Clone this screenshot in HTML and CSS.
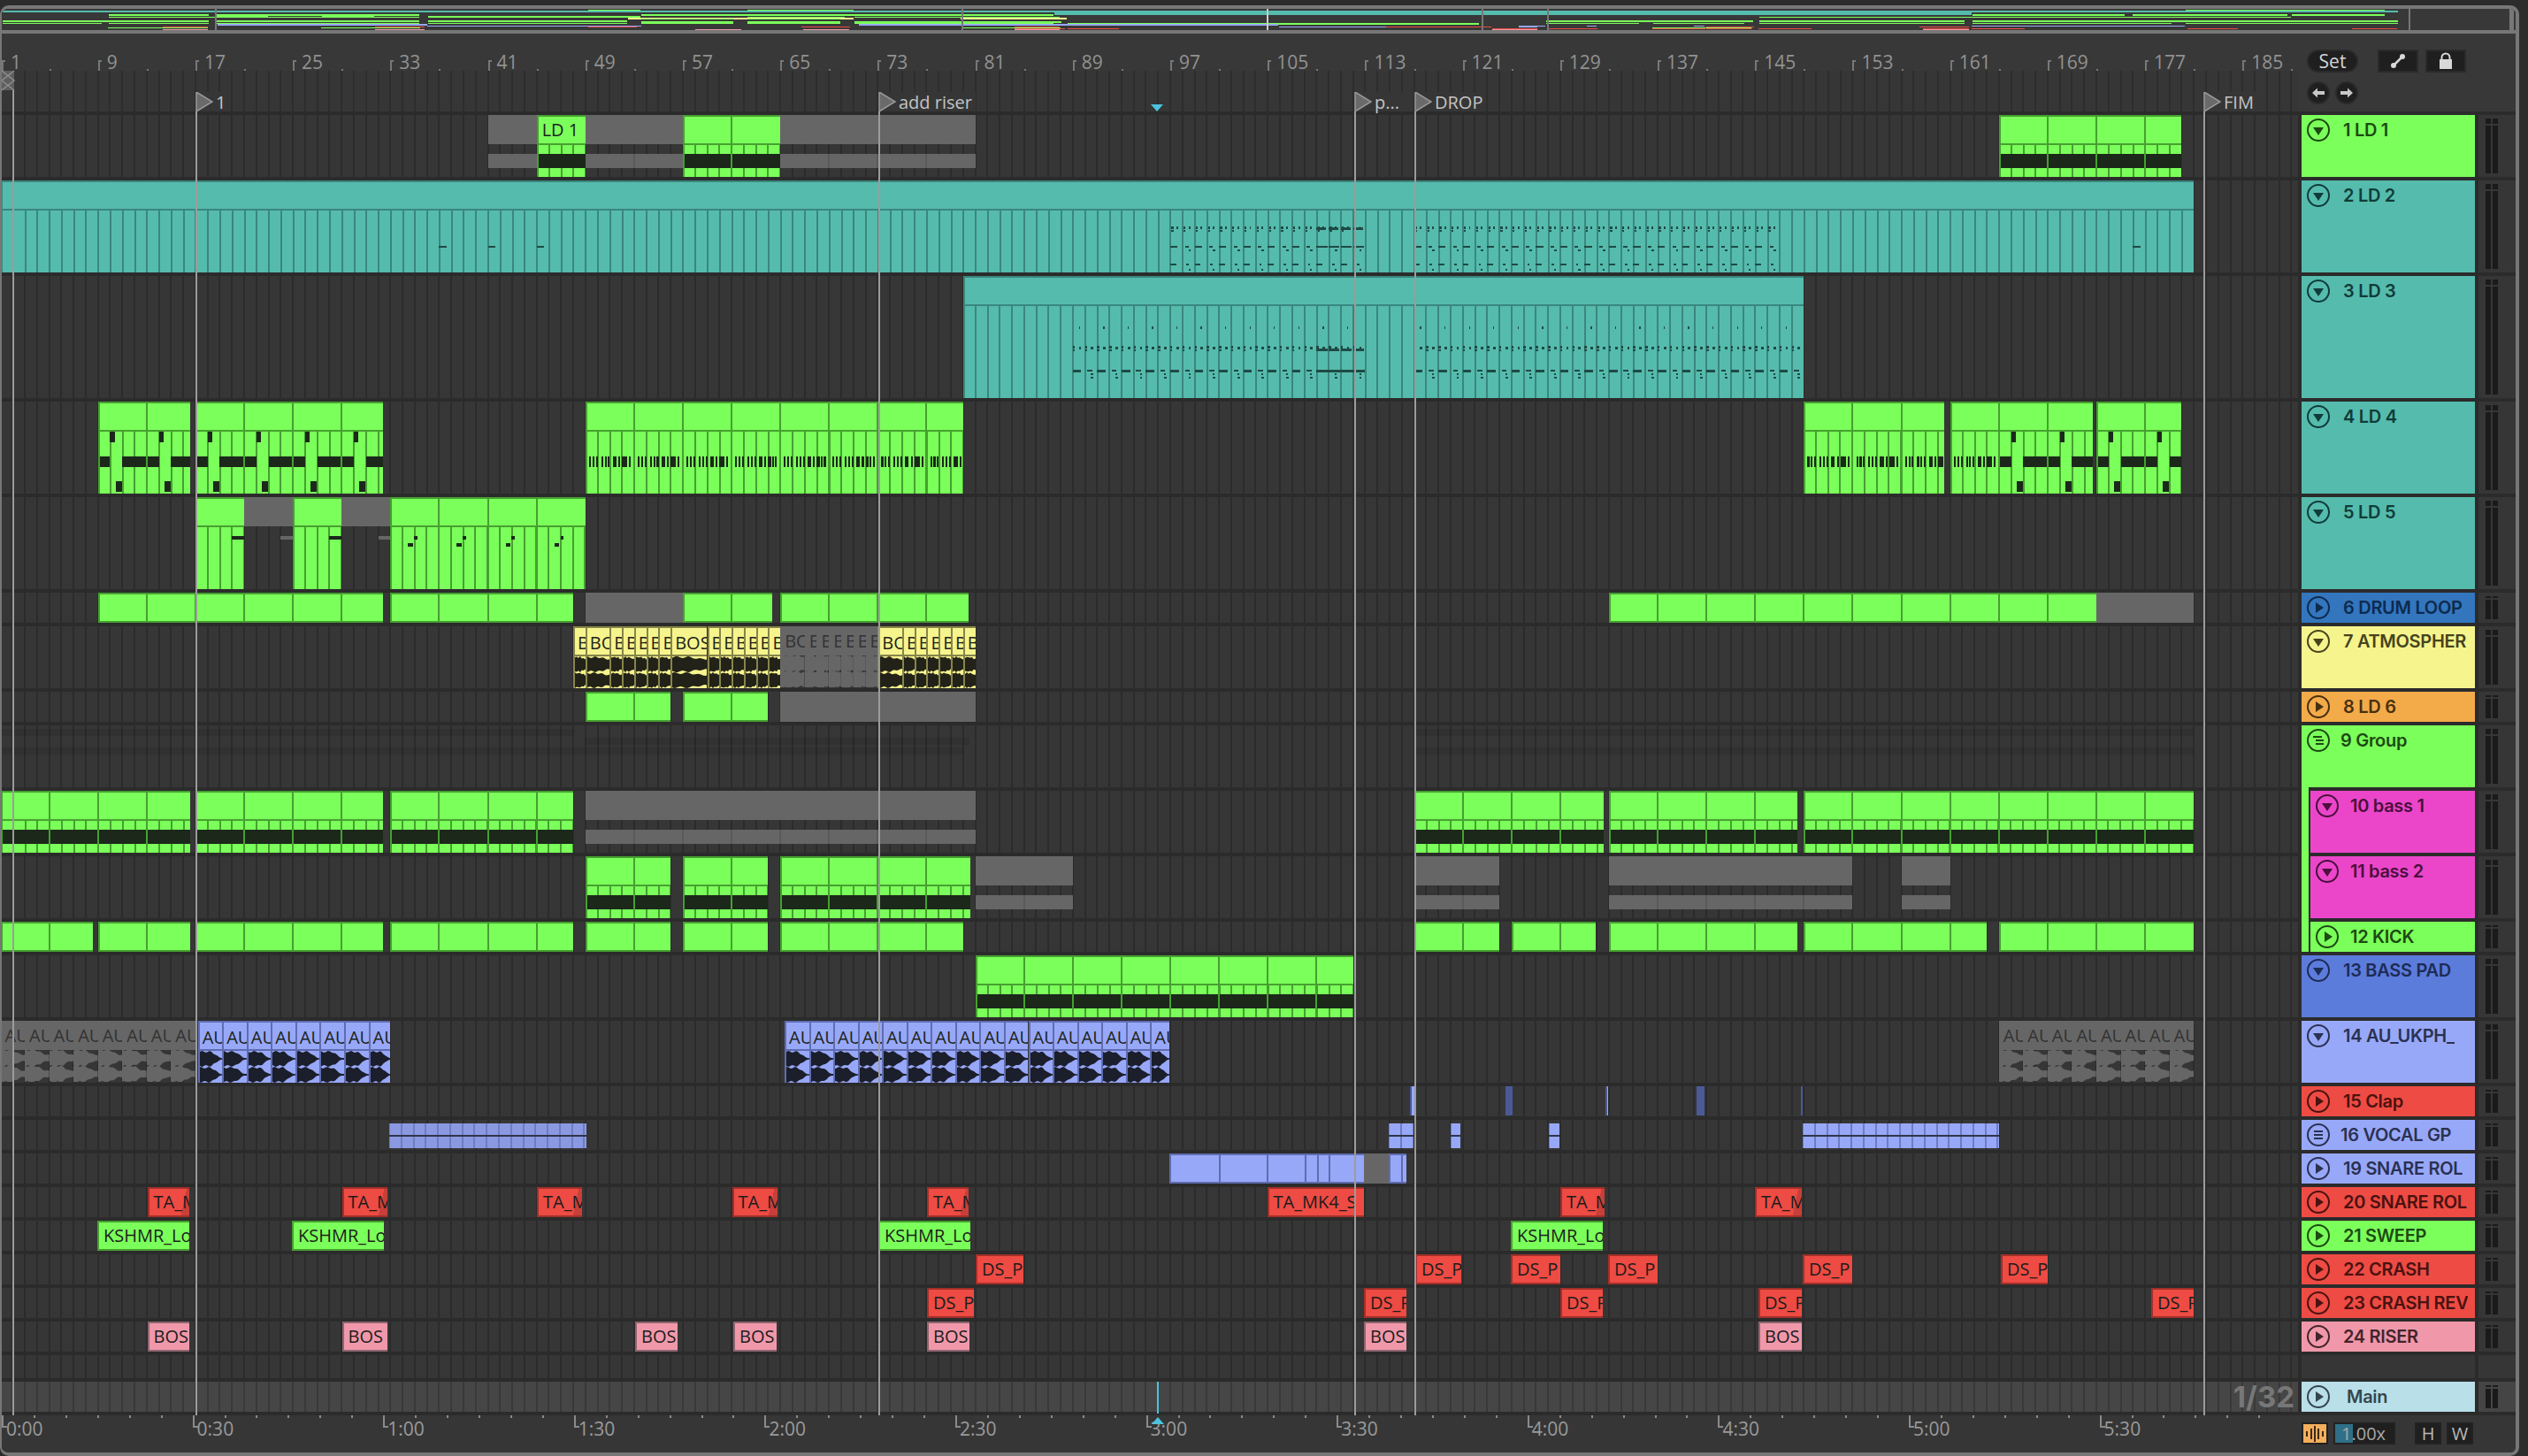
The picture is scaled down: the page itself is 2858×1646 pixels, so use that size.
FILE: index.html
```html
<!DOCTYPE html>
<html lang="en">
<head>
  <meta charset="UTF-8" />
  <title>Arrangement</title>
  <link rel="stylesheet" href="styles.css">
</head>
<body>
  <div class="app" id="app">
    <div class="overview" id="overview"><div class="overview-end"></div></div>

    <div class="top">
      <div class="top-left">
        <div class="ruler" id="ruler"></div>
        <div class="flag-strip"></div>
      </div>
      <div class="controls">
        <div class="controls-row">
          <button class="pill">Set</button>
          <button class="square">
            <svg width="22" height="22" viewBox="0 0 22 22"><path d="M6 16 L16 6" stroke="#d8d8d8" stroke-width="2.5"/><circle cx="16" cy="6" r="3" fill="#d8d8d8"/><circle cx="6" cy="16" r="3" fill="#d8d8d8"/></svg>
          </button>
          <button class="square">
            <svg width="18" height="20" viewBox="0 0 18 20"><path d="M4.5 9 V6 a4.5 4.5 0 0 1 9 0 V9" fill="none" stroke="#d8d8d8" stroke-width="2"/><rect x="2" y="8" width="14" height="11" fill="#d8d8d8"/></svg>
          </button>
        </div>
        <div class="arrows">
          <button class="round">
            <svg width="16" height="16" viewBox="0 0 16 16"><path d="M1 8 L7 2.5 V6 H15 V10 H7 V13.5 Z" fill="#c8c8c8"/></svg>
          </button>
          <button class="round">
            <svg width="16" height="16" viewBox="0 0 16 16"><path d="M15 8 L9 2.5 V6 H1 V10 H9 V13.5 Z" fill="#c8c8c8"/></svg>
          </button>
        </div>
      </div>
    </div>

    <div class="tracks" id="tracks"></div>

    <div class="bottom">
      <div class="times" id="times"></div>
      <div class="bottom-controls">
        <button class="cpu">
          <svg width="24" height="20" viewBox="0 0 24 20"><path d="M3 7 V13 M8 4 V16 M12 1 V19 M16 4 V16 M21 7 V13" stroke="#3a2a12" stroke-width="2"/></svg>
        </button>
        <div class="zoom-field"><div class="zoom-fill"></div><span class="zoom-text">1.00x</span></div>
        <button class="key key-h">H</button>
        <button class="key">W</button>
      </div>
    </div>
  </div>
  <script src="app.js"></script>
</body>
</html>
```

FILE: styles.css
```css
* {
  box-sizing: border-box;
}

html, body {
  margin: 0;
  height: 100%;
  overflow: hidden;
}

body {
  width: 2858px;
  height: 1646px;
  padding-top: 6px;
  background: #2c2c2c;
  font-family: "Open Sans", sans-serif;
  color: #1d2a18;
}

button {
  font-family: inherit;
  padding: 0;
  display: flex;
  align-items: center;
  justify-content: center;
}

.app {
  position: relative;
  width: 2848px;
  height: 1640px;
  background: #363636;
  border: solid #777;
  border-width: 4px 4px 4px 2px;
  border-radius: 10px;
  overflow: hidden;
  display: flex;
  flex-direction: column;
}

/* overview */
.overview {
  position: relative;
  height: 28px;
  flex-shrink: 0;
  background: #383838;
  border-bottom: 4px solid #777;
  overflow: hidden;
}

.overview-end {
  position: absolute;
  right: 2px;
  top: 0;
  bottom: 0;
  width: 5px;
  background: #777;
}

.mini {
  position: absolute;
}

.mini-line {
  position: absolute;
  top: 0;
  bottom: 0;
  width: 2px;
  background: #777;
}

.mini-line.now {
  background: #ccc;
}

/* ruler and controls */
.top {
  display: flex;
  height: 88px;
  flex-shrink: 0;
  background: #383838;
}

.top-left {
  width: 2596px;
  flex-shrink: 0;
}

.ruler {
  position: relative;
  height: 42px;
}

.ruler-tick {
  position: absolute;
  top: 30px;
  width: 4px;
  height: 12px;
  border: solid #777;
  border-width: 2px 0 0 2px;
}

.ruler-dot {
  position: absolute;
  top: 40px;
  width: 2px;
  height: 2px;
  background: #777;
}

.ruler-num {
  position: absolute;
  top: 19px;
  font-size: 21px;
  line-height: 27px;
  color: #929292;
}

.flag-strip {
  height: 46px;
  background: repeating-linear-gradient(90deg, #363636 0 11.276px, #2d2d2d 11.276px 13.276px, #363636 13.276px 13.776px);
}

.controls {
  flex: 1;
  padding: 18px 0 0 10px;
}

.controls-row, .arrows {
  display: flex;
}

.arrows {
  gap: 6px;
  margin-top: 10px;
}

.pill {
  width: 58px;
  height: 26px;
  margin-right: 22px;
  border-radius: 13px;
  border: 2px solid #2a2a2a;
  background: #1f1f1f;
  color: #d4d4d4;
  font-size: 21px;
  font-weight: 500;
}

.square {
  width: 46px;
  height: 26px;
  margin-right: 8px;
  border: 2px solid #2a2a2a;
  background: #1f1f1f;
}

.round {
  width: 26px;
  height: 26px;
  border-radius: 50%;
  border: 2px solid #2a2a2a;
  background: #1f1f1f;
}

/* track rows */
.tracks {
  display: flex;
  flex-direction: column;
  gap: 4px;
  flex-shrink: 0;
  padding: 4px 0;
  background: #2b2b2b;
}

.row {
  display: flex;
  gap: 4px;
  flex-shrink: 0;
}

.lane {
  position: relative;
  width: 2596px;
  flex-shrink: 0;
  overflow: hidden;
  background: repeating-linear-gradient(90deg, #363636 0 11.276px, #2b2b2b 11.276px 13.276px, #363636 13.276px 13.776px);
}

.lane-main {
  background: repeating-linear-gradient(90deg, #464646 0 11.276px, #393939 11.276px 13.276px, #464646 13.276px 13.776px);
}

.grid-text {
  position: absolute;
  right: 4px;
  top: -3px;
  font-family: Inter, sans-serif;
  font-size: 33px;
  line-height: 40px;
  font-weight: 700;
  color: #777;
}

.head {
  position: relative;
  width: 196px;
  flex-shrink: 0;
  background: var(--fill);
  color: var(--ink);
}

.head.nested {
  margin-left: 10px;
  width: 186px;
}

.head.nested::before {
  content: "";
  position: absolute;
  left: -10px;
  top: -4px;
  bottom: 0;
  width: 8px;
  background: #7bff5a;
}

.head.blank {
  background: #363636;
}

.head-line {
  display: flex;
  align-items: center;
  height: 34px;
  padding-left: 6px;
  gap: 15px;
}

.head.nested .head-line {
  gap: 13px;
}

.head.tight .head-line {
  gap: 12px;
}

.head.wide .head-line {
  gap: 19px;
}

.head-icon {
  flex-shrink: 0;
  display: block;
}

.head-name {
  font-family: Inter, sans-serif;
  font-size: 20px;
  font-weight: 600;
  letter-spacing: -0.3px;
  white-space: nowrap;
  overflow: hidden;
}

.meter {
  width: 42px;
  flex-shrink: 0;
  display: grid;
  grid-template-columns: 6px 6px;
  grid-template-rows: 6px 1fr;
  column-gap: 2px;
  row-gap: 2px;
  padding: 4px 20px 4px 8px;
  background: #363636;
}

.meter.small {
  grid-template-rows: 2px 1fr;
}

.meter.main {
  background: #454545;
}

.meter.empty {
  display: block;
  padding: 0;
}

.meter i {
  background: #1a1a1a;
}

/* colours */
.green { --fill: #7bff5a; --edge: #46a030; --ink: #1c4a12; --note: #1b281a; }
.teal { --fill: #55bbad; --edge: #3a877d; --ink: #103c38; --note: #1f4a45; }
.peri { --fill: #98a8f8; --edge: #5f6cb0; --ink: #2a3152; --note: #1b1e2b; }
.yellow { --fill: #f6f48d; --edge: #86854a; --ink: #45441c; --note: #222219; }
.red { --fill: #ed4b43; --edge: #a32f2a; --ink: #4a1210; --note: #222; }
.pink { --fill: #f098aa; --edge: #8e6570; --ink: #44242c; --note: #222; }
.magenta { --fill: #eb46c9; --edge: #9a2f84; --ink: #4a0f3d; --note: #222; }
.orange { --fill: #f3aa49; --edge: #a0702c; --ink: #47300f; --note: #222; }
.blue { --fill: #3376bd; --edge: #22508a; --ink: #0d2b4e; --note: #222; }
.pad { --fill: #5c7cdb; --edge: #3c538f; --ink: #1d2b57; --note: #222; }
.ice { --fill: #b9dfe9; --edge: #7b9aa2; --ink: #36464d; --note: #222; }

/* clips */
.clip {
  position: absolute;
  top: 0;
  bottom: 0;
  overflow: hidden;
  color: #1c241a;
  display: flex;
  flex-direction: column;
}

.clip::after {
  content: "";
  position: absolute;
  inset: 0;
  border: solid var(--edge);
  border-width: 2px 0 0 2px;
  pointer-events: none;
}

.clip-title {
  height: 34px;
  flex-shrink: 0;
  padding-left: 6px;
  border-bottom: 2px solid var(--edge);
  background: var(--fill);
  font-size: 20px;
  line-height: 33px;
  white-space: nowrap;
  overflow: hidden;
}

.clip-body {
  flex: 1;
  background: repeating-linear-gradient(90deg, var(--edge) 0 1px, var(--fill) 1px 12.776px, var(--edge) 12.776px 13.776px);
}

.note {
  position: absolute;
  background: var(--note);
}

.split {
  position: absolute;
  top: 0;
  bottom: 0;
  width: 2px;
  background: var(--edge);
}

.clip.block {
  background: var(--fill);
}

.clip.block::after {
  border-width: 2px 0 2px 2px;
}

.clip.shot {
  background: var(--fill);
  padding-left: 7px;
  font-size: 20px;
  line-height: 33px;
  white-space: nowrap;
  color: #1c1c1c;
}

.clip.shot::after {
  border-width: 2px 0 2px 2px;
}

.clip.shot.fade {
  background: linear-gradient(102deg, var(--fill) 82%, #c83f39 82%);
}

.clip.muted {
  --fill: #666;
  --edge: #5a5a5a;
  --note: #666;
}

.clip.muted::after {
  display: none;
}

.clip.muted .clip-title {
  border-bottom: 0;
  color: #333;
  height: 33px;
}

.clip.muted .clip-body {
  background: none;
}

.clip.audio {
  background: none;
}

.clip.audio::after {
  display: none;
}

.slice {
  position: absolute;
  top: 0;
  bottom: 0;
  overflow: hidden;
  border-left: 2px solid var(--edge);
  display: flex;
  flex-direction: column;
}

.slice .clip-title {
  height: 34px;
  padding-left: 3px;
  border-top: 2px solid var(--edge);
}

.slice-wave {
  flex: 1;
  background: var(--fill);
}

.slice-wave svg {
  display: block;
}

.slice-wave path {
  fill: var(--note);
}

.clip.muted .slice {
  border-left: 0;
}

.clip.muted .slice .clip-title {
  border-top: 0;
  padding-left: 5px;
}

.clip.muted .slice-wave {
  background: none;
}

.vox {
  position: absolute;
  top: 4px;
  bottom: 2px;
  overflow: hidden;
  background: repeating-linear-gradient(90deg, #6f7cc0 0 1px, var(--fill) 1px 12.776px, #6f7cc0 12.776px 13.776px);
}

.vox.dim {
  --fill: #8b99e2;
}

.vox::after {
  content: "";
  position: absolute;
  left: 0;
  right: 0;
  top: 13px;
  height: 2px;
  background: #30344a;
}

.sliver {
  position: absolute;
  top: 0;
  bottom: 1px;
  background: #4b5a96;
}

.sliver.lit {
  background: linear-gradient(90deg, #4b5a96 0 50%, #98a8f8 50%);
}

.shade {
  position: absolute;
  background: rgba(0, 0, 0, 0.09);
}

/* markers over the lanes */
.flag-line {
  position: absolute;
  width: 2px;
  bottom: 42px;
  background: #9c9c9c;
}

.flag {
  position: absolute;
  top: 94px;
  height: 22px;
  display: flex;
  align-items: center;
  gap: 3px;
  background: #363636;
  padding-right: 4px;
  font-size: 20px;
  color: #c4c4c4;
  white-space: nowrap;
}

.flag svg {
  display: block;
  flex-shrink: 0;
}

.loop-mark {
  position: absolute;
  left: 0;
  top: 70px;
}

.loop-mark svg {
  display: block;
}

.playhead-top {
  position: absolute;
  top: 108px;
  width: 0;
  height: 0;
  border: solid transparent;
  border-width: 8px 7px 0;
  border-top-color: #4cc3dd;
}

.playhead-line {
  position: absolute;
  top: 1552px;
  width: 2px;
  height: 36px;
  background: #4cc3dd;
}

.playhead-foot {
  position: absolute;
  top: 1592px;
  width: 0;
  height: 0;
  border: solid transparent;
  border-width: 0 7px 8px;
  border-bottom-color: #4cc3dd;
}

/* bottom bar */
.bottom {
  display: flex;
  flex: 1;
  background: #363636;
}

.times {
  position: relative;
  width: 2596px;
  flex-shrink: 0;
}

.time-tick {
  position: absolute;
  top: 0;
  width: 2px;
  height: 3px;
  background: #8a8a8a;
}

.time-major {
  position: absolute;
  top: 0;
  width: 6px;
  height: 14px;
  border: solid #8a8a8a;
  border-width: 0 0 2px 2px;
}

.time-num {
  position: absolute;
  top: 2px;
  font-size: 21px;
  line-height: 27px;
  color: #9a9a9a;
}

.bottom-controls {
  display: flex;
  align-items: flex-start;
  margin-left: 4px;
  padding-top: 8px;
}

.cpu {
  width: 30px;
  height: 25px;
  border: 2px solid #222;
  background: #f5ae5c;
}

.zoom-field {
  position: relative;
  width: 70px;
  height: 25px;
  margin-left: 6px;
  border: 2px solid #222;
  background: #1f1f1f;
}

.zoom-fill {
  width: 20px;
  height: 100%;
  background: #2f7088;
}

.zoom-text {
  position: absolute;
  left: 7px;
  top: 0;
  font-size: 20px;
  line-height: 21px;
  color: #a8a8a8;
}

.key {
  width: 30px;
  height: 25px;
  margin-left: 6px;
  border: 2px solid #222;
  background: #1f1f1f;
  color: #b8b8b8;
  font-size: 20px;
}

.key-h {
  margin-left: 22px;
}
```

FILE: app.js
```javascript
const BAR = 13.776;
const X = bar => (bar - 1) * BAR - 1.5;
const P = px => (px - 0.5) / BAR + 1;
const MINI_X = 1.0925;

const midi = (from, to, o) => ({ kind: "midi", from, to, ...o });
const block = (from, to, o) => ({ kind: "block", from, to, ...o });
const shot = (from, to, label, o) => ({ kind: "shot", from: P(from), to: P(to), label, ...o });
const audio = (slices, label, o) => ({ kind: "audio", slices, label, from: slices[0], to: slices[slices.length - 1], ...o });

function every(from, to, step) {
  const out = [];
  for (let b = from; b < to + 0.01; b += step) out.push(b);
  return out;
}

// notes are [bar offset from clip start, length in bars, y, height]
const BAND = { notes: () => [[0, 99, 44, 16]] };

function riff(clip) {
  const out = [];
  for (let p = clip.from; p < clip.to; p += 4) {
    const o = p - clip.from;
    out.push([o, 1, 62, 12], [o + 2, 2, 62, 12], [o + 1, 0.4, 34, 12], [o + 1.45, 0.5, 90, 12]);
  }
  return out;
}

function ticks(clip) {
  const out = [];
  let i = 0;
  for (let p = clip.from; p < clip.to; p++, i++) {
    const o = p - clip.from;
    if (i % 4 === 2) {
      out.push([o + 0.25, 0.3, 62, 12], [o + 0.7, 0.15, 62, 12], [o + 1, 0.28, 62, 12]);
    } else if (i % 4 !== 3) {
      out.push([o + 0.3, 0.15, 62, 12], [o + 0.58, 0.15, 62, 12], [o + 0.86, 0.15, 62, 12]);
    } else {
      out.push([o + 0.3, 0.15, 62, 12], [o + 0.58, 0.15, 62, 12]);
    }
  }
  return out;
}

function stab(clip) {
  return [[3, 1, 44, 4]];
}

function blips(clip) {
  const out = [];
  for (let p = 0; p < clip.to - clip.from; p += 4) {
    out.push([p + 1.95, 0.25, 44, 4], [p + 1.45, 0.4, 52, 4]);
  }
  return out;
}

function leadTwo(clip) {
  const out = [];
  const phrase = (from, to) => {
    for (let b = from; b < to; b++) {
      const o = b - clip.from;
      out.push([o + 0.1, 0.16, 52, 3], [o + 0.1, 0.16, 56, 2], [o + 0.5, 0.14, 52, 3]);
      if (b >= 109 && b < 113) out.push([o, 0.8, 53, 3], [o, 0.9, 74, 2]);
      if ((b - from) % 2 === 0) out.push([o, 0.6, 74, 2], [o, 0.5, 94, 2]);
      else out.push([o + 0.2, 0.3, 74, 2], [o + 0.5, 0.2, 78, 2], [o + 0.3, 0.2, 94, 2], [o + 0.5, 0.15, 100, 2]);
    }
  };
  phrase(97, 113);
  phrase(117, 147);
  [37, 41, 45, 176].forEach(b => out.push([b - clip.from, 0.6, 74, 2]));
  return out;
}

function leadThree(clip) {
  const out = [];
  const phrase = (from, to) => {
    for (let b = from; b < to; b++) {
      const o = b - clip.from;
      const n = b - from;
      if (n % 2 === 0) out.push([o + 0.5, 0.1, 57, 3]);
      out.push([o, 0.18, 79, 3], [o, 0.18, 83, 2], [o + 0.5, 0.2, 80, 3]);
      if (b >= 109 && b < 113) out.push([o, 0.9, 82, 3], [o, 1, 106, 3]);
      if (n % 2 === 0) out.push([o, 0.7, 106, 3]);
      else out.push([o + 0.2, 0.4, 106, 2], [o + 0.5, 0.15, 110, 2], [o + 0.5, 0.2, 114, 2]);
    }
  };
  phrase(89, 113);
  phrase(117, 149);
  return out;
}

const atmos = { label: s => (s > 2.5 ? "BOS" : s > 1.5 ? "BO" : "B"), sustain: 0.72, amp: 8 };
const atmosMuted = { ...atmos, muted: 1, amp: 9.5, sustain: 0.85 };
const vocal = { label: () => "AU", sustain: 0.1, amp: 8 };
const vocalMuted = { ...vocal, muted: 1, amp: 9, sustain: 0.4 };

const TRACKS = [
  { name: "1 LD 1", h: 70, color: "green", icon: "down", clips: [
    midi(41, 45, { muted: 1, ...BAND }), midi(45, 49, { label: "LD 1", ...BAND }), midi(49, 57, { muted: 1, ...BAND }),
    midi(57, 65, BAND), midi(65, 81, { muted: 1, ...BAND }), midi(165, 180, BAND)] },
  { name: "2 LD 2", h: 104, color: "teal", icon: "down", clips: [
    midi(1, 181, { plain: 1, notes: leadTwo })] },
  { name: "3 LD 3", h: 138, color: "teal", icon: "down", clips: [
    midi(80, 149, { plain: 1, notes: leadThree })] },
  { name: "4 LD 4", h: 104, color: "teal", icon: "down", lane: "green", clips: [
    midi(9, 16.55, { notes: riff }), midi(17, 32.4, { notes: riff }), midi(49, 80, { notes: ticks }),
    midi(149, 160.5, { notes: ticks }), midi(161, 172.7, { notes: c => ticks({ from: 161, to: 165 }).concat(riff({ from: 165, to: 173 }).map(n => [n[0] + 4, n[1], n[2], n[3]])) }),
    midi(173, 180, { notes: c => riff({ from: 173, to: 181 }) })] },
  { name: "5 LD 5", h: 104, color: "teal", icon: "down", lane: "green", clips: [
    midi(17, 21, { notes: stab }), midi(21, 25, { muted: 1, notes: stab }), midi(25, 29, { notes: stab }),
    midi(29, 33, { muted: 1, notes: stab }), midi(33, 49, { notes: blips })] },
  { name: "6 DRUM LOOP", h: 34, color: "blue", icon: "play", lane: "green", clips: [
    block(9, 32.4), block(33, 48), block(49, 57, { muted: 1 }), block(57, 64.35), block(65, 80.47),
    block(133, 173), block(173, 181, { muted: 1 })] },
  { name: "7 ATMOSPHER", h: 70, color: "yellow", icon: "down", clips: [
    audio([48, 49, 51, 52, 53, 54, 55, 56, 59, 60, 61, 62, 63, 64, 65], atmos.label, atmos),
    audio([65, 67, 68, 69, 70, 71, 72, 73], atmos.label, atmosMuted),
    audio([73, 75, 76, 77, 78, 79, 80, 81], atmos.label, atmos)] },
  { name: "8 LD 6", h: 34, color: "orange", icon: "play", lane: "green", clips: [
    block(49, 56), block(57, 64), block(65, 81, { muted: 1 })] },
  { name: "9 Group", h: 70, color: "green", icon: "open", tight: 1, shades: [
    [1, 48, 4, 8], [117, 181, 4, 8], [49, 80.5, 14, 8], [1, 80, 25, 8], [117, 181, 25, 8]], clips: [] },
  { name: "10 bass 1", h: 70, color: "magenta", icon: "down", nested: 1, lane: "green", clips: [
    midi(1, 16.6, BAND), midi(17, 32.4, BAND), midi(33, 48, BAND), midi(49, 81, { muted: 1, ...BAND }),
    midi(117, 132.6, BAND), midi(133, 148.5, BAND), midi(149, 181, BAND)] },
  { name: "11 bass 2", h: 70, color: "magenta", icon: "down", nested: 1, lane: "green", clips: [
    midi(49, 56, BAND), midi(57, 64, BAND), midi(65, 80.6, BAND), midi(81, 89, { muted: 1, ...BAND }),
    midi(117, 124, { muted: 1, ...BAND }), midi(133, 153, { muted: 1, ...BAND }), midi(157, 161, { muted: 1, ...BAND })] },
  { name: "12 KICK", h: 34, color: "green", icon: "play", nested: 1, clips: [
    block(1, 8.55), block(9, 16.55), block(17, 32.4), block(33, 48), block(49, 56), block(57, 64), block(65, 80),
    block(117, 124), block(125, 131.9), block(133, 148.5), block(149, 164), block(165, 181)] },
  { name: "13 BASS PAD", h: 70, color: "pad", icon: "down", lane: "green", clips: [midi(81, 112, BAND)] },
  { name: "14 AU_UKPH_", h: 70, color: "peri", icon: "down", clips: [
    audio(every(1, 17, 2), vocal.label, vocalMuted),
    audio(every(17.2, 31.2, 2).concat(33), vocal.label, vocal),
    audio(every(65.35, 95.35, 2).concat(96.9), vocal.label, vocal),
    audio(every(165, 181, 2), vocal.label, vocalMuted)] },
  { name: "15 Clap", h: 34, color: "red", icon: "play", slivers: [[1594, 1599, 1], [1702, 1710], [1815, 1818, 1], [1918, 1927], [2036, 2038]], clips: [] },
  { name: "16 VOCAL GP", h: 34, color: "peri", icon: "closed", tight: 1, vox: [[440, 663, 1], [1570, 1598], [1640, 1651], [1751, 1763], [2038, 2260]], clips: [] },
  { name: "19 SNARE ROL", h: 34, color: "peri", icon: "play", clips: [
    block(P(1322), P(1542), { at: [1378.6, 1433, 1475.6, 1489.5, 1503] }), block(P(1542), P(1570), { muted: 1 }), block(P(1570), P(1590), { at: [1585] })] },
  { name: "20 SNARE ROL", h: 34, color: "red", icon: "play", clips: [
    shot(166.5, 214, "TA_M", { fade: 1 }), shot(386.5, 438, "TA_M", { fade: 1 }), shot(607, 658, "TA_M", { fade: 1 }), shot(827.5, 878.5, "TA_M", { fade: 1 }),
    shot(1048, 1095, "TA_M", { fade: 1 }), shot(1432.6, 1542, "TA_MK4_S"), shot(1764, 1814, "TA_M", { fade: 1 }), shot(1984, 2036.5, "TA_M", { fade: 1 })] },
  { name: "21 SWEEP", h: 34, color: "green", icon: "play", clips: [
    shot(110, 214, "KSHMR_Lo"), shot(330, 434, "KSHMR_Lo"), shot(993, 1097, "KSHMR_Lo"), shot(1708, 1811.5, "KSHMR_Lo")] },
  { name: "22 CRASH", h: 34, color: "red", icon: "play", clips: [
    shot(1103, 1157, "DS_P"), shot(1600, 1652, "DS_P"), shot(1708, 1764, "DS_P"), shot(1818, 1874, "DS_P"), shot(2038, 2094, "DS_P"), shot(2262, 2315, "DS_P")] },
  { name: "23 CRASH REV", h: 34, color: "red", icon: "play", clips: [
    shot(1048, 1101, "DS_P"), shot(1542, 1590, "DS_P"), shot(1764, 1812, "DS_P"), shot(1988, 2036.5, "DS_P"), shot(2432, 2480, "DS_P")] },
  { name: "24 RISER", h: 34, color: "pink", icon: "play", clips: [
    shot(166.5, 214, "BOS"), shot(386.5, 438, "BOS"), shot(718, 766, "BOS"), shot(829, 878, "BOS"), shot(1048, 1096, "BOS"), shot(1542, 1590, "BOS"), shot(1988, 2036.5, "BOS")] },
  { name: "", h: 26, blank: 1, clips: [] },
  { name: "Main", h: 34, color: "ice", icon: "play", main: 1, wide: 1, clips: [] },
];

const ICONS = {
  down: '<polygon points="7,10 19,10 13,19"/>',
  play: '<polygon points="10,7 10,19 19,13"/>',
  closed: '<path d="M8 9 H18 M8 13 H18 M8 17 H18" fill="none" stroke="currentColor" stroke-width="2"/>',
  open: '<path d="M7 9 H17 M10 13 H19 M10 17 H19" fill="none" stroke="currentColor" stroke-width="2"/>',
};

function el(cls, parent, html) {
  const d = document.createElement("div");
  d.className = cls;
  if (html !== undefined) d.innerHTML = html;
  if (parent) parent.appendChild(d);
  return d;
}

function place(d, left, width) {
  d.style.left = left + "px";
  d.style.width = width + "px";
}

function smooth(a, b, t) {
  const k = Math.min(1, Math.max(0, (t - a) / (b - a)));
  return k * k * (3 - 2 * k);
}

function wavePath(w, amp, sustain, seed) {
  let path = "";
  [9, 27].forEach((mid, ch) => {
    const top = [];
    const bottom = [];
    const n = Math.max(6, Math.round(w / 2));
    for (let i = 0; i <= n; i++) {
      const t = i / n;
      const x = (t * w).toFixed(1);
      // a held body, then a tail that falls to the sustain level
      const a = amp * (sustain + (1 - sustain) * (1 - smooth(0.4, 0.9, t))) * (1 + 0.12 * Math.sin(t * 19 + seed + ch));
      top.push(x + "," + (mid - a).toFixed(1));
      bottom.unshift(x + "," + (mid + a).toFixed(1));
    }
    path += "M" + top.concat(bottom).join(" L") + " Z ";
  });
  return path;
}

function addNotes(c, clipEl) {
  if (!c.notes) return;
  c.notes(c).forEach(n => {
    const d = el("note", clipEl);
    place(d, n[0] * BAR, n[1] * BAR);
    d.style.top = n[2] + "px";
    d.style.height = n[3] + "px";
  });
}

function addSplits(c, clipEl) {
  const marks = c.at ? c.at.map(P) : every(Math.ceil((c.from - 1) / 4) * 4 + 1, c.to - 0.5, 4);
  marks.forEach(b => {
    if (b <= c.from + 0.5) return;
    const d = el("split", clipEl);
    place(d, X(b) - X(c.from) - 1, 2);
    if (c.muted && c.kind === "midi") {
      d.style.top = "44px";
      d.style.bottom = "auto";
      d.style.height = "16px";
    }
    if (c.muted && c.kind === "block") d.style.display = "none";
  });
}

function drawClip(c, track, lane) {
  const tone = c.kind === "block" || c.kind === "midi" ? (track.lane || track.color) : track.color;
  const cls = "clip " + tone + " " + c.kind + (c.muted ? " muted" : "") + (c.fade ? " fade" : "");
  const d = el(cls, lane);
  place(d, X(c.from), X(c.to) - X(c.from));

  if (c.kind === "midi") {
    const title = el("clip-title", d);
    if (c.label) title.textContent = c.label;
    el("clip-body", d);
    addNotes(c, d);
    if (!c.plain) addSplits(c, d);
  } else if (c.kind === "block") {
    addSplits(c, d);
  } else if (c.kind === "shot") {
    d.textContent = c.label;
  } else {
    for (let i = 0; i < c.slices.length - 1; i++) {
      const left = X(c.slices[i]) - X(c.from);
      const span = c.slices[i + 1] - c.slices[i];
      const w = span * BAR;
      const s = el("slice", d);
      place(s, left, w);
      el("clip-title", s, c.label(span));
      el("slice-wave", s, '<svg width="' + w + '" height="36" viewBox="0 0 ' + w + ' 36"><path d="' + wavePath(w, c.amp, c.sustain, i * 1.7) + '"/></svg>');
    }
  }
}

function drawHead(t, row) {
  const head = el("head " + (t.color || "") + (t.nested ? " nested" : "") + (t.tight ? " tight" : "") + (t.wide ? " wide" : "") + (t.blank ? " blank" : ""), row);
  if (t.blank) return;
  const line = el("head-line", head);
  line.innerHTML = '<svg class="head-icon" width="26" height="26" viewBox="0 0 26 26" fill="currentColor"><circle cx="13" cy="13" r="12" fill="none" stroke="currentColor" stroke-width="2"/>' + ICONS[t.icon] + "</svg>" +
    '<span class="head-name">' + t.name + "</span>";
}

function addMini(parent, from, to, top, h, color) {
  const d = el("mini " + color, parent);
  place(d, (X(from) + 2) * MINI_X, (to - from) * BAR * MINI_X - 1);
  d.style.top = ((top - 130) * 0.0164 + 0.5).toFixed(1) + "px";
  d.style.height = Math.max(1, Math.round(h * 0.022)) + "px";
  d.style.background = "var(--fill)";
}

function drawTracks() {
  const box = document.getElementById("tracks");
  const overview = document.getElementById("overview");
  let top = 130;

  TRACKS.forEach(t => {
    const row = el("row", box);
    row.style.height = t.h + "px";

    const lane = el("lane" + (t.main ? " lane-main" : ""), row);
    t.clips.forEach(c => {
      drawClip(c, t, lane);
      if (!c.muted) addMini(overview, c.from, c.to, top, t.h, c.kind === "block" || c.kind === "midi" ? (t.lane || t.color) : t.color);
    });

    (t.shades || []).forEach(s => {
      const d = el("shade", lane);
      place(d, X(s[0]), X(s[1]) - X(s[0]));
      d.style.top = s[2] + "px";
      d.style.height = s[3] + "px";
    });
    (t.slivers || []).forEach(s => {
      place(el("sliver" + (s[2] ? " lit" : ""), lane), s[0] - 2, s[1] - s[0]);
    });
    (t.vox || []).forEach(v => {
      place(el("vox peri" + (v[2] ? " dim" : ""), lane), v[0] - 2, v[1] - v[0]);
      addMini(overview, P(v[0]), P(v[1]), top, t.h, "peri");
    });
    if (t.main) el("grid-text", lane, "1/32");

    drawHead(t, row);

    if (t.blank) {
      el("meter empty", row);
    } else {
      const meter = el("meter" + (t.h < 40 ? " small" : "") + (t.main ? " main" : ""), row);
      meter.innerHTML = "<i></i><i></i><i></i><i></i>";
    }

    top += t.h + 4;
  });
}

function drawRuler() {
  const ruler = document.getElementById("ruler");
  for (let b = 1; b <= 185; b += 8) {
    const x = Math.max(0, X(b));
    el("ruler-tick", ruler).style.left = x + "px";
    el("ruler-num", ruler, String(b)).style.left = x + 10 + "px";
    el("ruler-dot", ruler).style.left = X(b + 4) + "px";
  }
}

function drawTimes() {
  const times = document.getElementById("times");
  const STEP = 215.6;
  for (let i = 0; i < 12; i++) {
    const x = i * STEP;
    el("time-major", times).style.left = x + "px";
    const m = Math.floor(i / 2) + ":" + (i % 2 ? "30" : "00");
    el("time-num", times, m).style.left = x + 5 + "px";
    for (let j = 1; j < 6; j++) {
      const tx = x + j * STEP / 6;
      if (tx < 2594) el("time-tick", times).style.left = tx + "px";
    }
  }
}

function drawFlags() {
  const app = document.getElementById("app");
  const overview = document.getElementById("overview");
  const flags = [[221, "1"], [993, "add riser"], [1531, "p..."], [1599, "DROP"], [2491, "FIM"]];

  const startLine = el("flag-line", app);
  place(startLine, 12, 2);
  startLine.style.top = "92px";

  flags.forEach(f => {
    const left = f[0] - 2;
    const line = el("flag-line", app);
    place(line, left, 2);
    line.style.top = "94px";
    const flag = el("flag", app, '<svg width="20" height="22" viewBox="0 0 20 22"><polygon points="1,0 19,11 1,22" fill="#6a6a6a" stroke="#999" stroke-width="1.5"/></svg><span>' + f[1] + "</span>");
    flag.style.left = left + "px";
    el("mini-line", overview).style.left = f[0] * MINI_X + "px";
  });

  el("mini-line now", overview).style.left = "1430px";

  el("loop-mark", app, '<svg width="16" height="23" viewBox="0 0 16 23"><rect x="0" y="0" width="14" height="22" fill="#5f5f5f"/><path d="M0 0 L14 11 L0 22 M14 0 L0 11 L14 22" fill="none" stroke="#8c8c8c" stroke-width="1.5"/></svg>');

  const x = 1306;
  el("playhead-top", app).style.left = x - 7 + "px";
  el("playhead-line", app).style.left = x + "px";
  el("playhead-foot", app).style.left = x - 6 + "px";
}

drawRuler();
drawTracks();
drawTimes();
drawFlags();
```
